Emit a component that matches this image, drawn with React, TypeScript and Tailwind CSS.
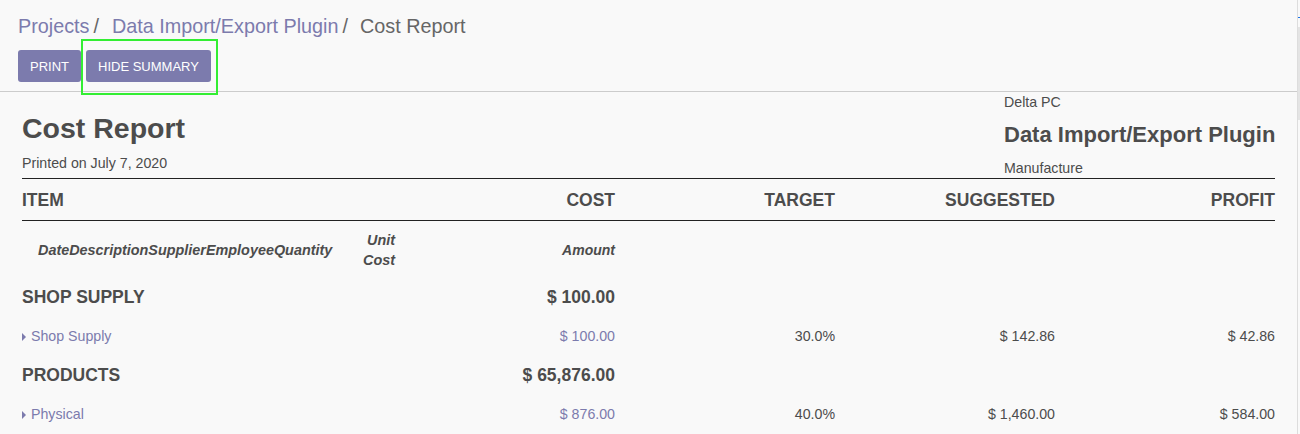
import { ReactNode } from 'react';

const cols = 'grid grid-cols-[373px_220px_220px_220px_220px]';

type Line = {
  label: string;
  cost: string;
  target: string;
  suggested: string;
  profit: string;
};

const sections: { title: string; total: string; lines: Line[] }[] = [
  {
    title: 'SHOP SUPPLY',
    total: '$ 100.00',
    lines: [
      { label: 'Shop Supply', cost: '$ 100.00', target: '30.0%', suggested: '$ 142.86', profit: '$ 42.86' },
    ],
  },
  {
    title: 'PRODUCTS',
    total: '$ 65,876.00',
    lines: [
      { label: 'Physical', cost: '$ 876.00', target: '40.0%', suggested: '$ 1,460.00', profit: '$ 584.00' },
    ],
  },
];

function Caret() {
  return (
    <svg className="w-[4px] h-[8px] shrink-0" viewBox="0 0 4 8">
      <path d="M0 0 L4 4 L0 8 Z" fill="#7c7bad" />
    </svg>
  );
}

function Cell({ children, className = '' }: { children?: ReactNode; className?: string }) {
  return <div className={`flex items-center justify-end ${className}`}>{children}</div>;
}

export default function App() {
  return (
    <div className="flex w-[1300px] h-[434px] overflow-hidden bg-[#f9f9f9] font-['Liberation_Sans',Arial,sans-serif] text-[#4c4c4c]">
      <div className="flex-1 flex flex-col">
        {/* control panel */}
        <div className="h-[94px] border-b border-[#cccccc] px-[18px] pt-[13px]">
          <div className="flex items-center text-[19.8px] leading-[26px] gap-[10px]">
            <span className="text-[#7c7bad]">Projects</span>
            <span className="text-[#666666] -ml-[6px]">/</span>
            <span className="text-[#7c7bad] ml-[3px]">Data Import/Export Plugin</span>
            <span className="text-[#666666] -ml-[6px]">/</span>
            <span className="text-[#666666] ml-[2px]">Cost Report</span>
          </div>
          <div className="flex gap-[5px] mt-[11px]">
            <button className="h-[32px] px-[12px] rounded-[3px] bg-[#7c7bad] text-white text-[13px] leading-none">
              PRINT
            </button>
            <div className="relative">
              <button className="h-[32px] px-[12px] rounded-[3px] bg-[#7c7bad] text-white text-[13px] leading-none">
                HIDE SUMMARY
              </button>
              <div className="absolute -left-[5px] -right-[7px] -top-[11px] -bottom-[13px] border-2 border-[#33ee33] pointer-events-none" />
            </div>
          </div>
        </div>

        {/* report */}
        <div className="px-[22px]">
          <div className="flex justify-between">
            <div className="pt-[19px]">
              <h1 className="text-[28.5px] leading-[34px] font-bold">Cost Report</h1>
              <p className="text-[14.2px] leading-[20px] mt-[8px]">Printed on July 7, 2020</p>
            </div>
            <div className="w-[271px] shrink-0">
              <p className="text-[14.2px] leading-[20px]">Delta PC</p>
              <p className="text-[22px] leading-[28px] font-bold mt-[9px] whitespace-nowrap">Data Import/Export Plugin</p>
              <p className="text-[14.2px] leading-[20px] mt-[9px]">Manufacture</p>
            </div>
          </div>

          <div className="border-t border-[#222222]">
            <div className={`${cols} h-[42px] pt-[1px] border-b border-[#222222] text-[17.5px] font-bold`}>
              <div className="flex items-center">ITEM</div>
              <Cell>COST</Cell>
              <Cell>TARGET</Cell>
              <Cell>SUGGESTED</Cell>
              <Cell>PROFIT</Cell>
            </div>

            <div className={`${cols} h-[57px] pt-[1px] text-[14.4px] leading-[20px] font-bold italic`}>
              <div className="flex items-center justify-between pl-[16px]">
                <span>DateDescriptionSupplierEmployeeQuantity</span>
                <span className="text-right">
                  Unit
                  <br />
                  Cost
                </span>
              </div>
              <Cell className="text-[14px]">Amount</Cell>
              <div />
              <div />
              <div />
            </div>

            {sections.map((s) => (
              <div key={s.title}>
                <div className={`${cols} h-[39px] text-[17.5px] font-bold`}>
                  <div className="flex items-center">{s.title}</div>
                  <Cell>{s.total}</Cell>
                  <div />
                  <div />
                  <div />
                </div>
                {s.lines.map((l) => (
                  <div key={l.label} className={`${cols} h-[39px] text-[14.2px]`}>
                    <div className="flex items-center gap-[5px] text-[#7c7bad]">
                      <Caret />
                      <span>{l.label}</span>
                    </div>
                    <Cell className="text-[#7c7bad]">{l.cost}</Cell>
                    <Cell>{l.target}</Cell>
                    <Cell>{l.suggested}</Cell>
                    <Cell>{l.profit}</Cell>
                  </div>
                ))}
              </div>
            ))}
          </div>
        </div>
      </div>

      {/* scrollbar strip */}
      <div className="w-[3px] border-l border-[#dddddd] flex flex-col">
        <div className="h-[17px]" />
        <div className="h-[1px] bg-[#1a73e8]" />
        <div className="h-[9px]" />
        <div className="h-[93px] bg-[#e4e4e4]" />
      </div>
    </div>
  );
}
